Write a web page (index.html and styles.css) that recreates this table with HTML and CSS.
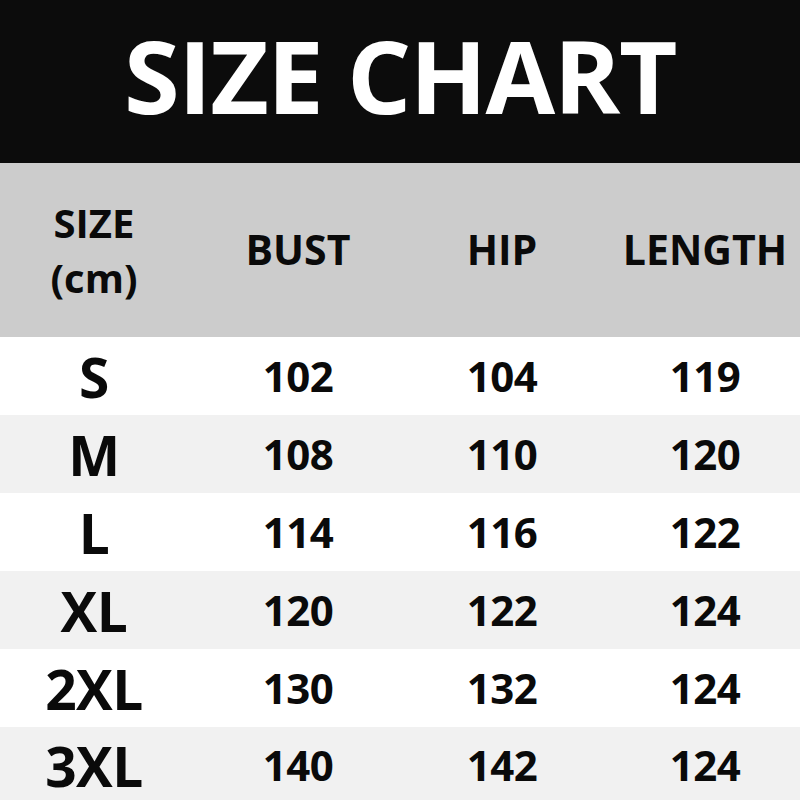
FILE: index.html
```html
<!DOCTYPE html>
<html>
<head>
<meta charset="utf-8">
<link rel="stylesheet" href="styles.css">
</head>
<body>
<div class="chart">
  <header class="title-bar"><h1 class="title">SIZE CHART</h1></header>
  <div class="row head">
    <div class="cell c1"><span class="hl">SIZE<br>(cm)</span></div>
    <div class="cell c2">BUST</div>
    <div class="cell c3">HIP</div>
    <div class="cell c4">LENGTH</div>
  </div>
  <div class="row r-white"><div class="cell c1 sz">S</div><div class="cell c2">102</div><div class="cell c3">104</div><div class="cell c4">119</div></div>
  <div class="row r-gray"><div class="cell c1 sz">M</div><div class="cell c2">108</div><div class="cell c3">110</div><div class="cell c4">120</div></div>
  <div class="row r-white"><div class="cell c1 sz">L</div><div class="cell c2">114</div><div class="cell c3">116</div><div class="cell c4">122</div></div>
  <div class="row r-gray"><div class="cell c1 sz">XL</div><div class="cell c2">120</div><div class="cell c3">122</div><div class="cell c4">124</div></div>
  <div class="row r-white"><div class="cell c1 sz">2XL</div><div class="cell c2">130</div><div class="cell c3">132</div><div class="cell c4">124</div></div>
  <div class="row r-gray last"><div class="cell c1 sz">3XL</div><div class="cell c2">140</div><div class="cell c3">142</div><div class="cell c4">124</div></div>
</div>
</body>
</html>
```

FILE: styles.css
```css
html, body {
  margin: 0;
  padding: 0;
  background: #fff;
}
.chart {
  width: 800px;
  height: 800px;
  overflow: hidden;
  font-family: "Open Sans", "Noto Sans", sans-serif;
  font-weight: 700;
  color: #0a0a0a;
  display: flex;
  flex-direction: column;
}
.title-bar {
  flex-shrink: 0;
  height: 163px;
  box-sizing: border-box;
  padding-bottom: 12px;
  background: #0c0c0c;
  display: flex;
  align-items: center;
  justify-content: center;
}
.title {
  margin: 0;
  color: #fff;
  font-size: 101px;
  font-weight: 700;
  letter-spacing: -1.5px;
  line-height: 1;
}
.row {
  flex-shrink: 0;
  display: grid;
  grid-template-columns: 188px 220px 188px 204px;
  height: 78px;
  font-size: 42px;
  line-height: 1.1;
  letter-spacing: -0.5px;
}
.row.head {
  height: 174px;
  background: #cccccc;
  font-size: 41px;
  letter-spacing: 0;
}
.row.last {
  height: 73px;
  box-sizing: border-box;
  padding-top: 4px;
}
.r-white { background: #ffffff; }
.r-gray { background: #f1f1f1; }
.cell {
  display: flex;
  align-items: center;
  justify-content: center;
}
.c4 { padding-left: 14px; }
.hl {
  text-align: center;
  line-height: 55px;
  font-size: 40px;
}
.sz {
  font-size: 55px;
  line-height: 1;
}
```
